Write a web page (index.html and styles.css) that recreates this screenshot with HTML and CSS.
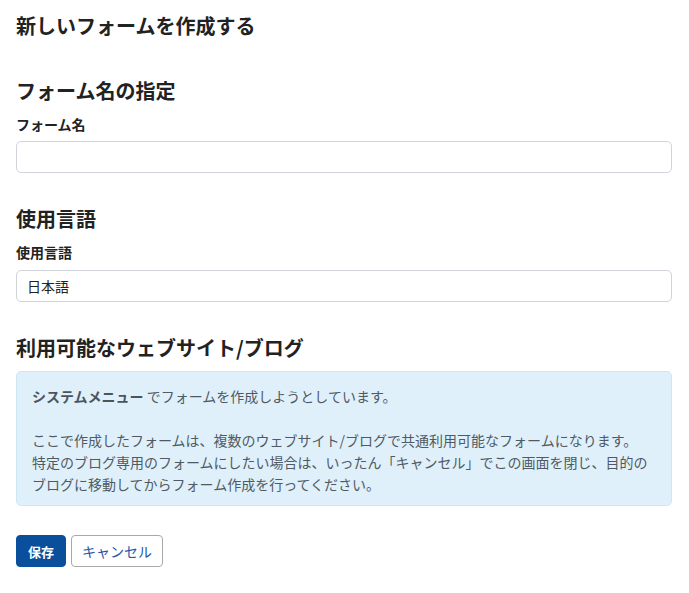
FILE: index.html
```html
<!DOCTYPE html>
<html lang="ja">
<head>
<meta charset="utf-8">
<title>新しいフォームを作成する</title>
<link rel="stylesheet" href="styles.css">
</head>
<body>
<main class="page">
  <h1 class="page-title">新しいフォームを作成する</h1>

  <section class="section section-first">
    <h2 class="section-title">フォーム名の指定</h2>
    <label class="field-label" for="form-name">フォーム名</label>
    <input class="field-input" id="form-name" type="text">
  </section>

  <section class="section">
    <h2 class="section-title">使用言語</h2>
    <label class="field-label" for="form-lang">使用言語</label>
    <div class="field-input field-static" id="form-lang">日本語</div>
  </section>

  <section class="section">
    <h2 class="section-title">利用可能なウェブサイト/ブログ</h2>
    <div class="info-box">
      <p class="info-p"><strong class="info-strong">システムメニュー</strong> でフォームを作成しようとしています。</p>
      <p class="info-p">ここで作成したフォームは、複数のウェブサイト/ブログで共通利用可能なフォームになります。<br>特定のブログ専用のフォームにしたい場合は、いったん「キャンセル」でこの画面を閉じ、目的のブログに移動してからフォーム作成を行ってください。</p>
    </div>
  </section>

  <div class="actions">
    <button class="btn btn-primary" type="button">保存</button>
    <button class="btn btn-default" type="button">キャンセル</button>
  </div>
</main>
</body>
</html>
```

FILE: styles.css
```css
* { box-sizing: border-box; }
html, body { margin: 0; padding: 0; background: #fff; }
body {
  font-family: "Noto Sans CJK JP", "Noto Sans", sans-serif;
  color: #222;
}
.page {
  padding: 12px 17px 0 16px;
  width: 689px;
}
.page-title {
  margin: 0;
  font-size: 20px;
  line-height: 28px;
  font-weight: 700;
  color: #222;
}
.section { margin-top: 32px; }
.section-first { margin-top: 37px; }
.section-title {
  margin: 0;
  font-size: 20px;
  line-height: 28px;
  font-weight: 700;
  color: #222;
}
.field-label {
  display: block;
  margin-top: 9px;
  font-size: 14px;
  line-height: 20px;
  font-weight: 700;
  color: #222;
}
.field-input {
  display: block;
  margin-top: 7px;
  width: 100%;
  height: 32px;
  border: 1px solid #d0d3da;
  border-radius: 5px;
  background: #fff;
  font-family: inherit;
  font-size: 14px;
  padding: 0 10px;
  outline: none;
}
.field-static {
  line-height: 30px;
  color: #222;
  margin-top: 8px;
}
.info-box {
  margin-top: 9px;
  background: #dff0fa;
  border: 1px solid #cfe6f5;
  border-radius: 5px;
  padding: 13px 15px 10px;
  color: #505a64;
  font-size: 14px;
  line-height: 22px;
}
.info-p { margin: 0; }
.info-p + .info-p { margin-top: 22px; }
.info-strong { font-weight: 700; color: #4a5560; }
.actions {
  margin-top: 29px;
  display: flex;
  gap: 5px;
}
.btn {
  height: 32px;
  border-radius: 4px;
  font-family: inherit;
  font-size: 13px;
  padding: 0;
  cursor: pointer;
}
.btn-primary {
  width: 50px;
  background: #0a4f9c;
  border: 1px solid #0a4f9c;
  color: #fff;
  font-weight: 700;
}
.btn-default {
  width: 92px;
  background: #fff;
  border: 1px solid #a8a8a8;
  color: #1f56a8;
  font-size: 14px;
}
```
